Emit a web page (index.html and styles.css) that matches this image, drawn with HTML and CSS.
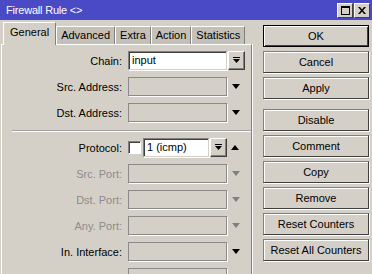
FILE: index.html
```html
<!DOCTYPE html>
<html lang="en">
<head>
    <meta charset="UTF-8">
    <title>Firewall Rule</title>
    <link rel="stylesheet" href="styles.css">
</head>
<body>
    <div class="titlebar">
        <span class="title">Firewall Rule &lt;&gt;</span>
        <div class="title-btns">
            <span class="tbtn">
                <svg width="9" height="9" viewBox="0 0 9 9"><rect x="0.5" y="0.5" width="8" height="8" fill="none" stroke="#000"/><rect x="0" y="0" width="9" height="2" fill="#000"/></svg>
            </span>
            <span class="tbtn">
                <svg width="8" height="7" viewBox="0 0 8 7"><path d="M0 0h2l2 2.5 2-2.5h2L5 3.5 8 7H6L4 4.5 2 7H0l3-3.5z" fill="#000"/></svg>
            </span>
        </div>
    </div>

    <div class="window">
        <div class="left">
            <div class="tabs">
                <div class="tab active">General</div>
                <div class="tab">Advanced</div>
                <div class="tab">Extra</div>
                <div class="tab">Action</div>
                <div class="tab">Statistics</div>
            </div>
            <div class="panel">
                <div class="row">
                    <label>Chain:</label>
                    <div class="field white">input</div>
                    <span class="dd-btn">
                        <svg width="7" height="7" viewBox="0 0 7 7"><rect x="0" y="0" width="7" height="1" fill="#000"/><path d="M0 2h7L3.5 6z" fill="#000"/></svg>
                    </span>
                </div>
                <div class="row">
                    <label>Src. Address:</label>
                    <div class="field"></div>
                    <span class="arrow down"></span>
                </div>
                <div class="row">
                    <label>Dst. Address:</label>
                    <div class="field"></div>
                    <span class="arrow down"></span>
                </div>

                <div class="separator"></div>

                <div class="row">
                    <label>Protocol:</label>
                    <span class="check"></span>
                    <div class="field white short">1 (icmp)</div>
                    <span class="dd-btn">
                        <svg width="7" height="7" viewBox="0 0 7 7"><rect x="0" y="0" width="7" height="1" fill="#000"/><path d="M0 2h7L3.5 6z" fill="#000"/></svg>
                    </span>
                    <span class="arrow up"></span>
                </div>
                <div class="row disabled">
                    <label>Src. Port:</label>
                    <div class="field"></div>
                    <span class="arrow down"></span>
                </div>
                <div class="row disabled">
                    <label>Dst. Port:</label>
                    <div class="field"></div>
                    <span class="arrow down"></span>
                </div>
                <div class="row disabled">
                    <label>Any. Port:</label>
                    <div class="field"></div>
                    <span class="arrow down"></span>
                </div>
                <div class="row">
                    <label>In. Interface:</label>
                    <div class="field"></div>
                    <span class="arrow down"></span>
                </div>
                <div class="row">
                    <label></label>
                    <div class="field"></div>
                </div>
            </div>
        </div>

        <div class="buttons">
            <button class="default">OK</button>
            <button>Cancel</button>
            <button>Apply</button>
            <button class="spaced">Disable</button>
            <button>Comment</button>
            <button>Copy</button>
            <button>Remove</button>
            <button>Reset Counters</button>
            <button>Reset All Counters</button>
        </div>
    </div>
</body>
</html>
```

FILE: styles.css
```css
body {
    margin: 0;
    width: 372px;
    height: 274px;
    overflow: hidden;
    background: #d4d0c8;
    font-family: 'Liberation Sans', Arial, sans-serif;
    font-size: 11px;
    color: #000;
}
.titlebar {
    height: 20px;
    background: #4a4ac6;
    color: #fff;
    display: flex;
    align-items: center;
    justify-content: space-between;
    padding: 0 2px 0 6px;
}
.title {
    font-size: 11px;
    letter-spacing: -0.2px;
}
.title-btns {
    display: flex;
    gap: 1px;
}
.tbtn {
    width: 14px;
    height: 13px;
    background: #d4d0c8;
    border: 1px solid;
    border-color: #fff #404040 #404040 #fff;
    display: flex;
    align-items: center;
    justify-content: center;
}
.window {
    display: flex;
}
.left {
    width: 252px;
}
.tabs {
    display: flex;
    align-items: flex-end;
    height: 24px;
    padding-left: 3px;
}
.tab {
    height: 17px;
    line-height: 16px;
    padding: 0 4px;
    background: #c4c0b8;
    border: 1px solid;
    border-color: #fff #808080 transparent #fff;
    border-bottom: none;
    position: relative;
}
.tab.active {
    height: 22px;
    line-height: 19px;
    background: #d4d0c8;
    padding: 0 6px;
    margin-bottom: -1px;
    z-index: 1;
}
.panel {
    margin-left: 1px;
    height: 223px;
    overflow: hidden;
    border-top: 1px solid #fff;
    border-left: 1px solid #fff;
    border-right: 1px solid #808080;
    box-shadow: 1px 0 0 #fff;
    padding-top: 6px;
    display: flex;
    flex-direction: column;
    gap: 7px;
}
.row {
    display: flex;
    align-items: center;
    height: 19px;
    flex-shrink: 0;
}
.row label {
    width: 120px;
    text-align: right;
    margin-right: 6px;
    flex-shrink: 0;
}
.row.disabled label {
    color: #8c8c8c;
}
.field {
    width: 99px;
    height: 19px;
    box-sizing: border-box;
    border: 1px solid #8a8a8a;
    box-shadow: 1px 1px 0 #fff;
    padding-left: 3px;
    line-height: 17px;
    flex-shrink: 0;
}
.field.white {
    background: #fff;
    border-color: #808080 #d4d0c8 #d4d0c8 #808080;
    box-shadow: inset 1px 1px 0 #404040, 1px 1px 0 #fff;
}
.field.short {
    width: 66px;
    margin-left: 2px;
}
.dd-btn {
    width: 17px;
    height: 19px;
    box-sizing: border-box;
    margin-left: 1px;
    border: 1px solid;
    border-color: #fff #404040 #404040 #fff;
    box-shadow: inset -1px -1px 0 #808080;
    display: flex;
    align-items: center;
    justify-content: center;
}
.check {
    width: 13px;
    height: 13px;
    box-sizing: border-box;
    background: #fff;
    border: 1px solid;
    border-color: #808080 #fff #fff #808080;
    box-shadow: inset 1px 1px 0 #404040;
    flex-shrink: 0;
}
.arrow {
    width: 0;
    height: 0;
    margin-left: 4px;
    border-left: 4px solid transparent;
    border-right: 4px solid transparent;
}
.arrow.down {
    margin-left: 5px;
    border-top: 5px solid #000;
}
.arrow.up {
    border-bottom: 5px solid #000;
}
.row.disabled .arrow.down {
    border-top-color: #808080;
}
.separator {
    margin: 1px 0 -1px 10px;
    height: 1px;
    flex-shrink: 0;
    background: #a0a0a0;
    border-bottom: 1px solid #fff;
}
.buttons {
    margin-left: 11px;
    padding-top: 5px;
    display: flex;
    flex-direction: column;
    gap: 4px;
}
.buttons button {
    width: 106px;
    height: 22px;
    box-sizing: border-box;
    background: #d4d0c8;
    font-family: inherit;
    font-size: 11px;
    color: #000;
    border: 1px solid;
    border-color: #808080 #404040 #404040 #808080;
    box-shadow: inset 1px 1px 0 #fff, 1px 1px 0 #fff;
    padding: 0;
}
.buttons button.default {
    border: 1px solid #000;
    box-shadow: inset 1px 1px 0 #fff, inset -1px -1px 0 #404040;
}
.buttons button.spaced {
    margin-top: 6px;
}
```
